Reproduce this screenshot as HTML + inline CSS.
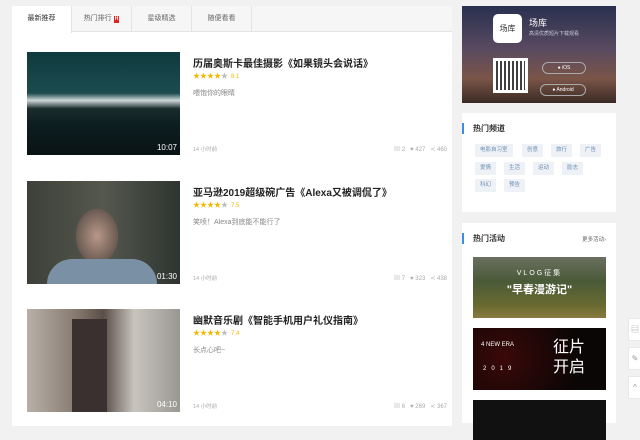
<!DOCTYPE html><html><head><meta charset="utf-8"><style>
*{margin:0;padding:0;box-sizing:border-box}
body{width:640px;height:414px;overflow:hidden;background:#f1f1f1;font-family:"Liberation Sans","Noto Sans CJK SC",sans-serif;position:relative}
.main{position:absolute;left:12px;top:6px;width:440px;height:420px;background:#fff}
.tabs{height:26px;background:#f6f6f6;border-bottom:1px solid #e4e4e4;display:flex}
.tab{width:60px;height:26px;font-size:7px;color:#666;text-align:center;line-height:26px;border-right:1px solid #e4e4e4}
.tab.on{background:#fff;height:27px;color:#333}
.h{display:inline-block;background:#d22;color:#fff;font-size:5px;line-height:7px;padding:0 1px;margin-left:2px;font-weight:bold}
.item{position:absolute;left:15px;width:420px;height:103px}
.img{position:absolute;left:0;top:0;width:153px;height:103px}
.dur{position:absolute;right:3px;bottom:3px;color:#fff;font-size:8px}
.t{position:absolute;left:166px;top:3px;font-size:10px;color:#222;font-weight:bold}
.st{position:absolute;left:166px;top:19px;font-size:7px;color:#f5b800;letter-spacing:0}
.st span{color:#bbb}.st i{font-style:normal;color:#f5b800;margin-left:3px;font-size:6px}
.d{position:absolute;left:166px;top:36px;font-size:7px;color:#888}
.tm{position:absolute;left:166px;bottom:2px;font-size:5.5px;color:#aaa}
.m{position:absolute;right:0;bottom:2px;font-size:6px;color:#aaa}
.side{position:absolute;left:462px;width:154px;background:#fff}
.ttl{position:absolute;left:12px;font-size:8px;color:#333;font-weight:bold;border-left:2px solid #3a8ee6;padding-left:9px;margin-left:-12px}
.tag{position:absolute;background:#eef2f7;color:#6a8db0;font-size:5.5px;height:13px;line-height:13px;padding:0 5px}
.btn{position:absolute;left:628px;width:14px;height:23px;background:#fff;border:1px solid #e8e8e8;color:#999;font-size:8px;text-align:center;line-height:21px}
</style></head><body>
<div class="main">
<div class="tabs"><div class="tab on">最新推荐</div><div class="tab">热门排行<span class="h">H</span></div><div class="tab">星级精选</div><div class="tab">随便看看</div></div>
<div class="item" style="top:46px"><div class="img" style="background:linear-gradient(#0f3a3e 0%,#1c4b4e 40%,#cfd8d8 47%,#1a2c2c 55%,#0c1e20 70%,#0a1214 100%)"><div class="dur">10:07</div></div>
<div class="t">历届奥斯卡最佳摄影《如果镜头会说话》</div><div class="st">★★★★<span>★</span><i>8.1</i></div><div class="d">喂饱你的眼睛</div><div class="tm">14 小时前</div><div class="m">▤ 2 &nbsp; ♥ 427 &nbsp; ≺ 460</div></div>
<div class="item" style="top:175px"><div class="img" style="background:radial-gradient(ellipse 35px 45px at 70px 55px,#b89888,#6a5a52 60%,transparent 61%),linear-gradient(90deg,#3c4038,#55584e 50%,#2e3430)"><div style="position:absolute;left:20px;bottom:0;width:110px;height:25px;background:#7a90a4;border-radius:30px 30px 0 0"></div><div class="dur">01:30</div></div>
<div class="t">亚马逊2019超级碗广告《Alexa又被调侃了》</div><div class="st">★★★★<span>★</span><i>7.5</i></div><div class="d">笑喷！Alexa到底能不能行了</div><div class="tm">14 小时前</div><div class="m">▤ 7 &nbsp; ♥ 323 &nbsp; ≺ 438</div></div>
<div class="item" style="top:303px"><div class="img" style="background:linear-gradient(90deg,#b8b0a8,#8a7e74 30%,#5a4e48 50%,#c8c4be 70%,#9a9892)"><div style="position:absolute;left:45px;top:10px;width:35px;height:93px;background:#3a3030"></div><div class="dur">04:10</div></div>
<div class="t">幽默音乐剧《智能手机用户礼仪指南》</div><div class="st">★★★★<span>★</span><i>7.4</i></div><div class="d">长点心吧~</div><div class="tm">14 小时前</div><div class="m">▤ 6 &nbsp; ♥ 269 &nbsp; ≺ 367</div></div>
</div>
<div class="side" style="top:6px;height:97px;background:linear-gradient(#2a3050,#5a4a60 45%,#7a5548 75%,#3a2a24)">
<div style="position:absolute;left:31px;top:8px;width:29px;height:29px;background:#fff;border-radius:5px;font-size:8px;color:#333;text-align:center;line-height:29px">场库</div>
<div style="position:absolute;left:67px;top:10px;color:#fff;font-size:9px">场库</div>
<div style="position:absolute;left:67px;top:24px;color:#ccd;font-size:5px">高清优质短片下载观看</div>
<div style="position:absolute;left:31px;top:52px;width:35px;height:35px;background:#fff;padding:3px"><div style="width:100%;height:100%;background:repeating-linear-gradient(90deg,#111 0 2px,#fff 2px 4px),#111;opacity:.8"></div></div>
<div style="position:absolute;left:80px;top:56px;width:44px;height:12px;border:1px solid #aaa;border-radius:6px;color:#fff;font-size:5px;text-align:center;line-height:10px">● iOS</div>
<div style="position:absolute;left:78px;top:78px;width:46px;height:12px;border:1px solid #aaa;border-radius:6px;color:#fff;font-size:5px;text-align:center;line-height:10px">● Android</div>
</div>
<div class="side" style="top:113px;height:99px">
<div class="ttl" style="top:10px">热门频道</div>
<div class="tag" style="left:13px;top:31px">电影自习室</div><div class="tag" style="left:60px;top:31px">创意</div><div class="tag" style="left:89px;top:31px">旅行</div><div class="tag" style="left:118px;top:31px">广告</div>
<div class="tag" style="left:13px;top:49px">爱情</div><div class="tag" style="left:42px;top:49px">生活</div><div class="tag" style="left:71px;top:49px">运动</div><div class="tag" style="left:100px;top:49px">励志</div>
<div class="tag" style="left:13px;top:66px">科幻</div><div class="tag" style="left:42px;top:66px">预告</div>
</div>
<div class="side" style="top:223px;height:200px">
<div class="ttl" style="top:10px">热门活动</div><div style="position:absolute;right:10px;top:12px;font-size:5.5px;color:#666">更多活动›</div>
<div style="position:absolute;left:11px;top:34px;width:133px;height:61px;background:linear-gradient(#6a7060,#4a5a38 40%,#6a6a30 80%,#8a7a40);color:#fff;text-align:center"><div style="font-size:7px;margin-top:11px;letter-spacing:2px">VLOG征集</div><div style="font-size:11px;font-weight:bold;margin-top:3px">"早春漫游记"</div></div>
<div style="position:absolute;left:11px;top:105px;width:133px;height:62px;background:radial-gradient(circle at 30px 30px,#3a0808,#0a0606 70%);color:#fff"><div style="position:absolute;left:8px;top:14px;font-size:6px">4 NEW ERA</div><div style="position:absolute;left:10px;top:38px;font-size:6px;letter-spacing:5px">2019</div><div style="position:absolute;left:80px;top:10px;font-size:16px;line-height:20px">征片<br>开启</div></div>
<div style="position:absolute;left:11px;top:177px;width:133px;height:40px;background:#111"></div>
</div>
<div class="btn" style="top:318px">▤</div><div class="btn" style="top:347px">✎</div><div class="btn" style="top:376px">^</div>
</body></html>
